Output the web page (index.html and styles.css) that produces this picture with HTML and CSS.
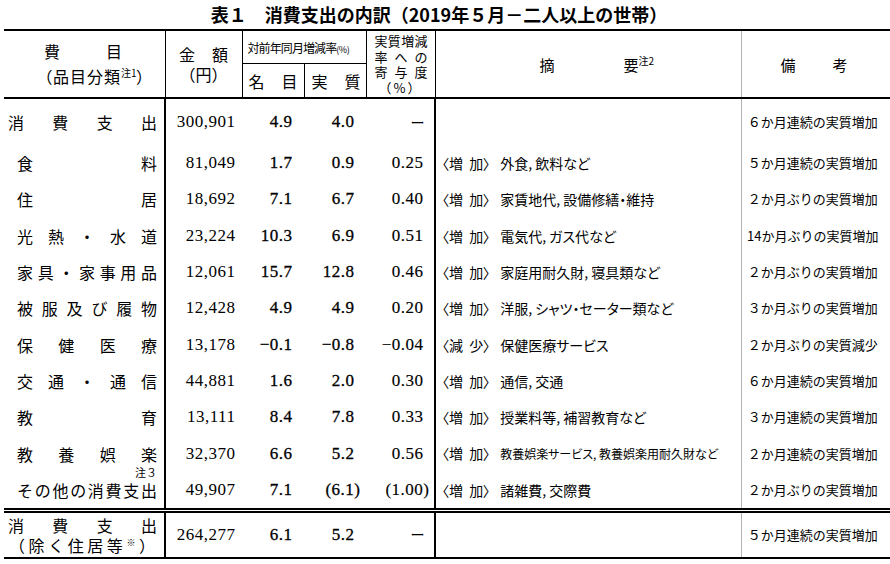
FILE: index.html
```html
<!DOCTYPE html>
<html lang="ja">
<head>
<meta charset="utf-8">
<title>消費支出の内訳</title>
<link rel="stylesheet" href="styles.css">
</head>
<body>
<div class="page">
<h1 class="title">表１　消費支出の内訳（2019年５月－二人以上の世帯）</h1>
<table class="tbl">
<colgroup>
<col class="w-name"><col class="w-amt"><col class="w-nom"><col class="w-real"><col class="w-con"><col class="w-desc"><col class="w-note">
</colgroup>
<thead>
<tr class="hr1">
<th rowspan="2" class="th-name"><div class="dist hn1">費目</div><div class="hn2">（品目分類<sup class="note">注1</sup>）</div></th>
<th rowspan="2" class="th-amt"><div class="dist ha1">金額</div><div class="ha2">（円）</div></th>
<th colspan="2" class="th-grp">対前年同月増減率<span class="pct">(%)</span></th>
<th rowspan="2" class="th-con"><div class="dist">実質増減</div><div class="dist">率への</div><div class="dist">寄与度</div><div class="hc4">（%）</div></th>
<th rowspan="2" class="th-desc"><span class="k1">摘</span>要<sup class="note">注2</sup></th>
<th rowspan="2" class="th-note"><span class="k2">備</span>考</th>
</tr>
<tr class="hr2">
<th class="th-nom"><div class="dist">名目</div></th>
<th class="th-real"><div class="dist">実質</div></th>
</tr>
</thead>
<tbody>
<tr class="r-top">
<td class="name top"><div class="dist">消費支出</div></td>
<td class="num amt">300,901</td>
<td class="num rate">4.9</td>
<td class="num rate">4.0</td>
<td class="num con"><span class="dash">ー</span></td>
<td class="desc"></td>
<td class="rem">６か月連続の実質増加</td>
</tr>
<tr>
<td class="name"><div class="dist">食料</div></td>
<td class="num amt">81,049</td>
<td class="num rate">1.7</td>
<td class="num rate">0.9</td>
<td class="num con">0.25</td>
<td class="desc"><span class="tag">〈増 加〉</span>外食, 飲料など</td>
<td class="rem">５か月連続の実質増加</td>
</tr>
<tr>
<td class="name"><div class="dist">住居</div></td>
<td class="num amt">18,692</td>
<td class="num rate">7.1</td>
<td class="num rate">6.7</td>
<td class="num con">0.40</td>
<td class="desc"><span class="tag">〈増 加〉</span>家賃地代, 設備修繕・維持</td>
<td class="rem">２か月ぶりの実質増加</td>
</tr>
<tr>
<td class="name"><div class="dist">光熱・水道</div></td>
<td class="num amt">23,224</td>
<td class="num rate">10.3</td>
<td class="num rate">6.9</td>
<td class="num con">0.51</td>
<td class="desc"><span class="tag">〈増 加〉</span>電気代, ガス代など</td>
<td class="rem">14か月ぶりの実質増加</td>
</tr>
<tr>
<td class="name"><div class="dist">家具・家事用品</div></td>
<td class="num amt">12,061</td>
<td class="num rate">15.7</td>
<td class="num rate">12.8</td>
<td class="num con">0.46</td>
<td class="desc"><span class="tag">〈増 加〉</span>家庭用耐久財, 寝具類など</td>
<td class="rem">２か月ぶりの実質増加</td>
</tr>
<tr>
<td class="name"><div class="dist">被服及び履物</div></td>
<td class="num amt">12,428</td>
<td class="num rate">4.9</td>
<td class="num rate">4.9</td>
<td class="num con">0.20</td>
<td class="desc"><span class="tag">〈増 加〉</span>洋服, シャツ・セーター類など</td>
<td class="rem">３か月ぶりの実質増加</td>
</tr>
<tr>
<td class="name"><div class="dist">保健医療</div></td>
<td class="num amt">13,178</td>
<td class="num rate">−0.1</td>
<td class="num rate">−0.8</td>
<td class="num con">−0.04</td>
<td class="desc"><span class="tag">〈減 少〉</span>保健医療サービス</td>
<td class="rem">２か月ぶりの実質減少</td>
</tr>
<tr>
<td class="name"><div class="dist">交通・通信</div></td>
<td class="num amt">44,881</td>
<td class="num rate">1.6</td>
<td class="num rate">2.0</td>
<td class="num con">0.30</td>
<td class="desc"><span class="tag">〈増 加〉</span>通信, 交通</td>
<td class="rem">６か月連続の実質増加</td>
</tr>
<tr>
<td class="name"><div class="dist">教育</div></td>
<td class="num amt">13,111</td>
<td class="num rate">8.4</td>
<td class="num rate">7.8</td>
<td class="num con">0.33</td>
<td class="desc"><span class="tag">〈増 加〉</span>授業料等, 補習教育など</td>
<td class="rem">３か月連続の実質増加</td>
</tr>
<tr>
<td class="name"><div class="dist">教養娯楽</div></td>
<td class="num amt">32,370</td>
<td class="num rate">6.6</td>
<td class="num rate">5.2</td>
<td class="num con">0.56</td>
<td class="desc"><span class="tag">〈増 加〉</span><span class="small">教養娯楽サービス, 教養娯楽用耐久財など</span></td>
<td class="rem">２か月連続の実質増加</td>
</tr>
<tr class="r-other">
<td class="name"><div class="dist rel">その他の消費支出<span class="n3">注３</span></div></td>
<td class="num amt">49,907</td>
<td class="num rate">7.1</td>
<td class="num rate">(6.1<span class="hang">)</span></td>
<td class="num con">(1.00<span class="hang">)</span></td>
<td class="desc"><span class="tag">〈増 加〉</span>諸雑費, 交際費</td>
<td class="rem">２か月ぶりの実質増加</td>
</tr>
<tr class="r-total">
<td class="name top"><div class="dist">消費支出</div><div class="dist t2">（除く住居等<sup class="kome">※</sup>）</div></td>
<td class="num amt">264,277</td>
<td class="num rate">6.1</td>
<td class="num rate">5.2</td>
<td class="num con"><span class="dash">ー</span></td>
<td class="desc"></td>
<td class="rem">５か月連続の実質増加</td>
</tr>
</tbody>
</table>
</div>
</body>
</html>
```
FILE: styles.css
```css
* { box-sizing: border-box; }
html, body { margin: 0; padding: 0; background: #fff; }
body {
  width: 890px;
  height: 564px;
  overflow: hidden;
  color: #000;
  font-family: "Noto Sans CJK JP", "Noto Sans", sans-serif;
}
.page { padding-left: 4px; }
.title {
  margin: 0;
  width: 870px;
  height: 29px;
  line-height: 28px;
  font-size: 18px;
  font-weight: 700;
  text-align: center;
}
.tbl {
  border-collapse: collapse;
  table-layout: fixed;
  width: 886px;
}
.w-name { width: 161px; }
.w-amt { width: 77px; }
.w-nom { width: 62px; }
.w-real { width: 62px; }
.w-con { width: 69px; }
.w-desc { width: 306px; }
.w-note { width: 149px; }

th, td { padding: 0; vertical-align: middle; font-weight: normal; }

.dist { text-align: justify; text-align-last: justify; }

/* header */
.hr1 { height: 33.5px; }
.hr2 { height: 34.5px; }
.hr1 th { border-top: 2px solid #000; }
thead th { border-right: 1px solid #000; border-bottom: 2px solid #000; }
.th-grp { border-bottom: 1px solid #000; }
.th-desc { border-right: 1px solid #b4b4b4; }
.th-note { border-right: none; }

.th-name { font-size: 16px; line-height: 25px; text-align: left; }
.hn1 { width: 78px; margin-left: 40px; }
.hn2 { padding-left: 40px; font-feature-settings: "palt"; letter-spacing: 1px; }
sup.note { font-size: 10px; line-height: 1; vertical-align: 6px; letter-spacing: 0; }

.th-amt { font-size: 16px; line-height: 20px; text-align: center; }
.ha1 { width: 49px; margin: 0 auto; }

.th-grp {
  font-size: 12px;
  letter-spacing: -0.9px;
  white-space: nowrap;
  text-align: left;
  padding-left: 5px;
}
.pct { font-size: 9px; letter-spacing: -0.5px; }

.th-nom, .th-real { font-size: 16px; }
.th-nom .dist { margin: 0 6px; }
.th-real .dist { margin: 0 5px 0 7px; }

.th-con { font-size: 13px; line-height: 15.5px; }
.th-con .dist { margin: 0 7px 0 8px; }
.hc4 { text-align: center; letter-spacing: 2px; }

.th-desc { font-size: 15px; text-align: left; padding-left: 104px; }
.k1 { margin-right: 69px; }
.th-note { font-size: 15px; text-align: left; padding-left: 39px; }
.k2 { margin-right: 37px; }

/* body */
tbody td { line-height: 20px; }
tbody tr { height: 36.3px; }
tbody tr.r-top { height: 47px; }
tbody tr.r-other { height: 38.8px; }
tbody tr.r-total { height: 47.5px; }
.r-total td { border-top: 5px double #000; border-bottom: 2px solid #000; }

td.name {
  border-right: 2px solid #000;
  padding: 0 7px 0 13px;
  font-size: 16px;
}
td.name.top { padding-left: 4px; }
.rel { position: relative; }
.n3 {
  position: absolute;
  right: 0;
  top: -14px;
  font-size: 11px;
  line-height: 12px;
}
.t2 { padding: 0 2px 0 1px; }
.kome { font-size: 9px; vertical-align: 6px; line-height: 1; }

.num {
  font-family: "Liberation Serif", serif;
  font-size: 17px;
  text-align: right;
  letter-spacing: 0.5px;
  white-space: nowrap;
}
.amt { padding-right: 6.5px; }
.rate { padding-right: 11.5px; -webkit-text-stroke: 0.3px #000; }
td.con { padding-right: 10.5px; border-right: 2px solid #000; -webkit-text-stroke: 0.15px #000; }
.hang { margin-right: -6px; }
.dash {
  font-family: "Noto Sans CJK JP", sans-serif;
  font-size: 14px;
  letter-spacing: 0;
  margin-right: -1px;
}

td.desc {
  border-right: 1px solid #b4b4b4;
  padding-left: 6px;
  font-size: 14px;
  font-feature-settings: "palt";
  white-space: nowrap;
}
.tag { margin-right: 10px; word-spacing: 3px; }
.small { font-size: 12px; }

td.rem {
  font-size: 13px;
  text-align: center;
  padding-right: 6px;
  white-space: nowrap;
}
```
